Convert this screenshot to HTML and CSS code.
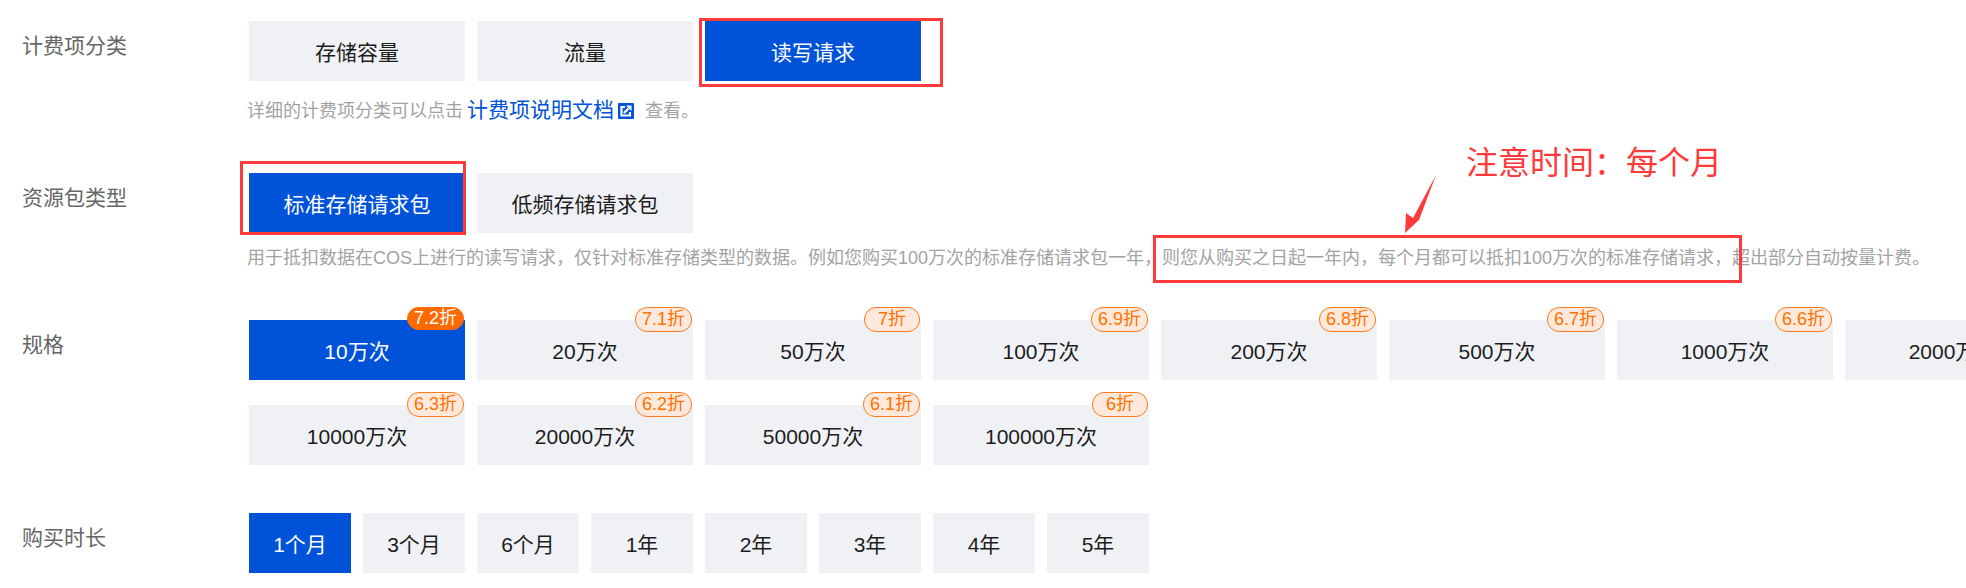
FILE: index.html
```html
<!DOCTYPE html>
<html lang="zh-CN">
<head>
    <meta charset="UTF-8">
    <title>资源包购买</title>
    <link rel="stylesheet" href="styles.css">
</head>
<body>
    <div class="page">
        <div class="row">
            <div class="row-label">计费项分类</div>
            <div class="row-body">
                <div class="options">
                    <button class="option">存储容量</button>
                    <button class="option">流量</button>
                    <button class="option selected">读写请求</button>
                </div>
                <p class="hint hint-first">详细的计费项分类可以点击<a class="hint-link" href="#">计费项说明文档<svg class="link-icon" viewBox="0 0 16 16"><rect width="16" height="16" rx="1" fill="#0052d9"/><path d="M7 4H3.500v8.500H12V9" fill="none" stroke="#fff" stroke-width="2.200"/><path d="M6 10L10.500 5.500" stroke="#fff" stroke-width="2.400"/><polygon points="8,2.500 13.500,2.500 13.500,8" fill="#fff"/></svg></a><span class="hint-end">查看。</span></p>
            </div>
        </div>

        <div class="row">
            <div class="row-label">资源包类型</div>
            <div class="row-body">
                <div class="options">
                    <button class="option selected">标准存储请求包</button>
                    <button class="option">低频存储请求包</button>
                </div>
                <p class="hint">用于抵扣数据在COS上进行的读写请求，仅针对标准存储类型的数据。例如您购买100万次的标准存储请求包一年，则您从购买之日起一年内，每个月都可以抵扣100万次的标准存储请求，超出部分自动按量计费。</p>
            </div>
        </div>

        <div class="row row-spec">
            <div class="row-label">规格</div>
            <div class="row-body">
                <div class="options">
                    <button class="option selected">10万次<span class="discount">7.2折</span></button>
                    <button class="option">20万次<span class="discount">7.1折</span></button>
                    <button class="option">50万次<span class="discount">7折</span></button>
                    <button class="option">100万次<span class="discount">6.9折</span></button>
                    <button class="option">200万次<span class="discount">6.8折</span></button>
                    <button class="option">500万次<span class="discount">6.7折</span></button>
                    <button class="option">1000万次<span class="discount">6.6折</span></button>
                    <button class="option">2000万次<span class="discount">6.5折</span></button>
                    <button class="option">10000万次<span class="discount">6.3折</span></button>
                    <button class="option">20000万次<span class="discount">6.2折</span></button>
                    <button class="option">50000万次<span class="discount">6.1折</span></button>
                    <button class="option">100000万次<span class="discount">6折</span></button>
                </div>
            </div>
        </div>

        <div class="row">
            <div class="row-label">购买时长</div>
            <div class="row-body">
                <div class="options">
                    <button class="option option-small selected">1个月</button>
                    <button class="option option-small">3个月</button>
                    <button class="option option-small">6个月</button>
                    <button class="option option-small">1年</button>
                    <button class="option option-small">2年</button>
                    <button class="option option-small">3年</button>
                    <button class="option option-small">4年</button>
                    <button class="option option-small">5年</button>
                </div>
            </div>
        </div>
    </div>

    <!-- red annotations drawn over the screenshot -->
    <div class="mark mark-type"></div>
    <div class="mark mark-package"></div>
    <div class="mark mark-sentence"></div>
    <div class="note">注意时间：每个月</div>
    <svg class="note-arrow" viewBox="0 0 36 62"><polygon points="33,2 16,47 2,60 3,40 10,45" fill="#ff3a3a"/></svg>
</body>
</html>
```

FILE: styles.css
```css
html, body {
    margin: 0;
    padding: 0;
    height: 100%;
    overflow: hidden;
}

body {
    position: relative;
    background: #fff;
    font-family: "Liberation Sans", "Noto Sans CJK SC", sans-serif;
    color: #1c1c1c;
}

.page {
    padding: 21px 0 0 22px;
}

.row {
    display: flex;
    margin-bottom: 50px;
}

.row:last-child {
    margin-bottom: 0;
}

.row-spec {
    margin-bottom: 48px;
}

.row-label {
    width: 227px;
    flex-shrink: 0;
    padding-top: 10px;
    font-size: 21px;
    line-height: 30px;
    color: #666;
}

.options {
    display: flex;
    flex-wrap: wrap;
    gap: 25px 12px;
    width: 1812px;
}

.option {
    position: relative;
    width: 216px;
    height: 60px;
    padding: 0;
    border: none;
    background: #f0f1f5;
    font-family: inherit;
    font-size: 21px;
    color: #1c1c1c;
}

.option-small {
    width: 102px;
}

.option.selected {
    background: #0052d9;
    color: #fff;
}

.discount {
    position: absolute;
    top: -13px;
    right: 1px;
    box-sizing: border-box;
    min-width: 56px;
    height: 25px;
    padding: 0 6px;
    border: 1px solid #ff7a1a;
    border-radius: 12px;
    background: #ffe9dc;
    font-size: 18px;
    line-height: 23px;
    text-align: center;
    color: #ff7200;
}

.selected .discount {
    height: 23px;
    border-color: #ff6a00;
    background: #ff6a00;
    line-height: 21px;
    color: #fff;
}

.hint {
    margin: 13px 0 0 -2px;
    font-size: 18px;
    line-height: 24px;
    white-space: nowrap;
    color: #a3a3a3;
}

.hint-first {
    margin-top: 17px;
}

.hint-link {
    margin-left: 4px;
    font-size: 21px;
    color: #0052d9;
    text-decoration: none;
}

.hint-end {
    margin-left: 11px;
}

.link-icon {
    width: 16px;
    height: 16px;
    margin-left: 4px;
    vertical-align: -2px;
}

.mark {
    position: absolute;
    box-sizing: border-box;
    border: 3px solid #ff3a3a;
}

.mark-type {
    left: 699px;
    top: 18px;
    width: 244px;
    height: 69px;
}

.mark-package {
    left: 240px;
    top: 161px;
    width: 226px;
    height: 74px;
}

.mark-sentence {
    left: 1153px;
    top: 235px;
    width: 589px;
    height: 48px;
}

.note {
    position: absolute;
    left: 1466px;
    top: 142px;
    font-size: 32px;
    line-height: 42px;
    white-space: nowrap;
    color: #ff3a3a;
}

.note-arrow {
    position: absolute;
    left: 1403px;
    top: 173px;
    width: 36px;
    height: 62px;
}
```
